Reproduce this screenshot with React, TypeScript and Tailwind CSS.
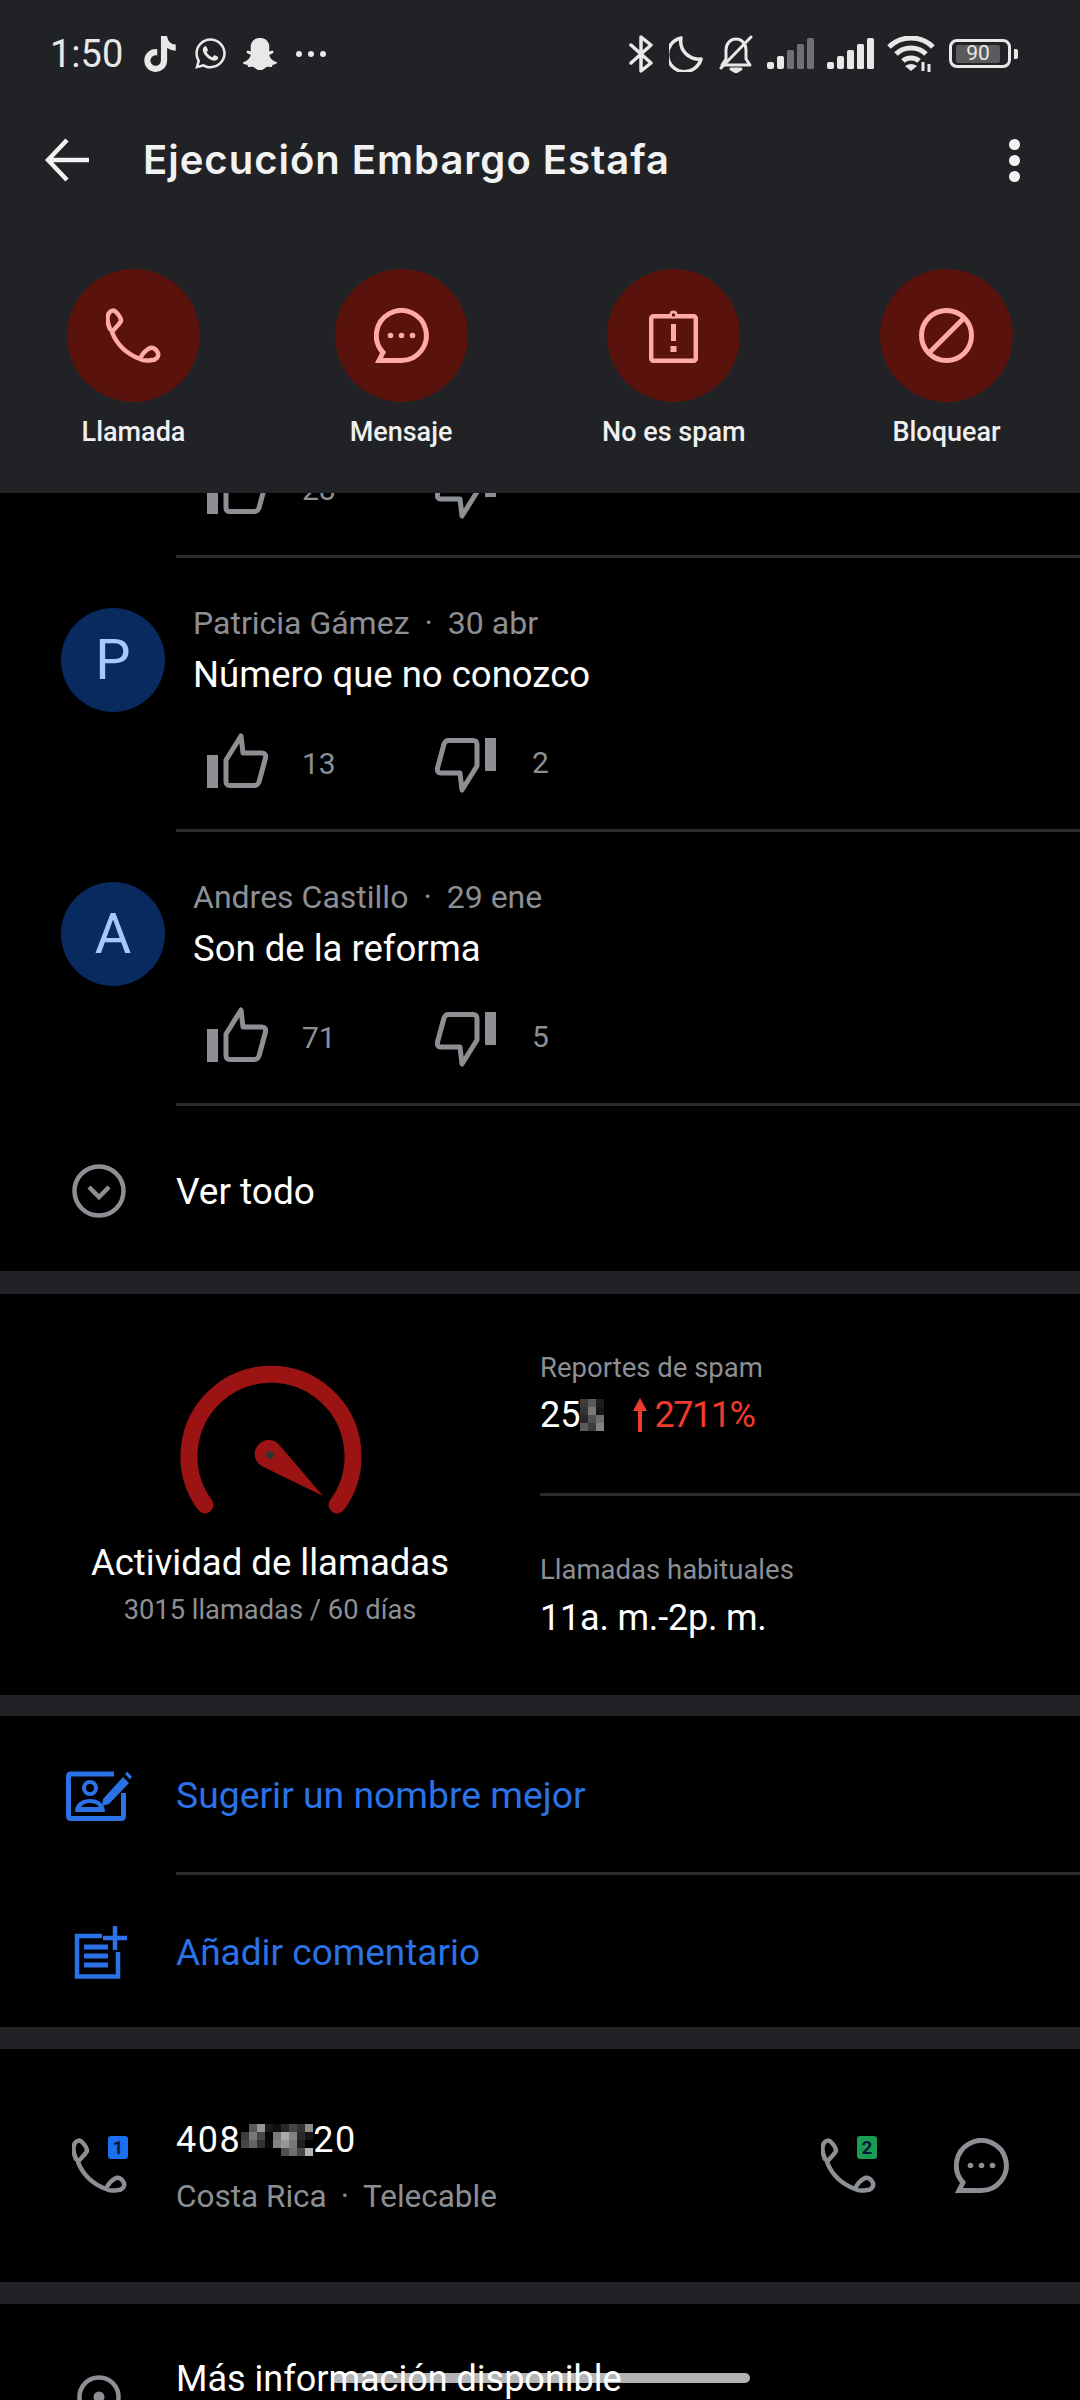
import React from 'react';
import { FaTiktok, FaWhatsapp, FaSnapchatGhost } from 'react-icons/fa';

const PhoneIcon = ({ className }: { className: string }) => (
  <svg viewBox="0 0 55 55" className={className} fill="none" stroke="currentColor" strokeWidth="4.5" strokeLinejoin="round" strokeLinecap="round">
    <path d="M4 21C1 14 1 8 3 5C5 2 8 2 10 4C13 7 15 10 15 13C13 17 9 20 6 24C11 37 21 46 34 51C36 46 40 42 44 40C47 39 50 41 52 45C53 49 50 52 46 52C41 53 37 53 34 51" />
  </svg>
);

const ChatIcon = ({ className }: { className: string }) => (
  <svg viewBox="0 0 55 55" className={className} fill="none" stroke="currentColor" strokeWidth="5">
    <path d="M5 52.5H27.5A25 25 0 1 0 9 44.5Z" />
    <circle cx="16.5" cy="27.5" r="2.8" fill="currentColor" stroke="none" />
    <circle cx="27.5" cy="27.5" r="2.8" fill="currentColor" stroke="none" />
    <circle cx="38.5" cy="27.5" r="2.8" fill="currentColor" stroke="none" />
  </svg>
);

const SpamIcon = ({ className }: { className: string }) => (
  <svg viewBox="0 0 49 55" className={className} fill="none" stroke="currentColor" strokeWidth="4.5" strokeLinejoin="round">
    <rect x="2.2" y="8.2" width="44.6" height="44.6" rx="2.5" />
    <circle cx="24.5" cy="6.5" r="4" fill="currentColor" stroke="none" />
    <circle cx="24.5" cy="7" r="1.7" fill="#5a120c" stroke="none" />
    <rect x="22" y="16" width="5" height="17" fill="currentColor" stroke="none" />
    <rect x="21.5" y="38" width="6" height="6" fill="currentColor" stroke="none" />
  </svg>
);

const BlockIcon = ({ className }: { className: string }) => (
  <svg viewBox="0 0 55 55" className={className} fill="none" stroke="currentColor" strokeWidth="5">
    <circle cx="27.5" cy="27.5" r="25" />
    <path d="M10 45L45 10" />
  </svg>
);

const ThumbIcon = ({ className }: { className: string }) => (
  <svg viewBox="0 0 61 55" className={className} fill="none">
    <rect x="0" y="22" width="11" height="33" fill="currentColor" />
    <path d="M19 27L34 3L36 20H55C58 20 59 22 58.500 25L52 49C51 51 50 52.500 48 52.500H23C20 52.500 19 51 19 48Z" stroke="currentColor" strokeWidth="5" strokeLinejoin="round" />
  </svg>
);

const Mosaic = ({ cols, cell, shades }: { cols: number; cell: number; shades: number[] }) => (
  <span className="inline-flex flex-wrap shrink-0" style={{ width: cols * cell }}>
    {shades.map((shade, i) => (
      <span key={i} style={{ width: cell, height: cell, background: `rgb(${shade},${shade},${shade})` }} />
    ))}
  </span>
);

const StatusBar = () => (
  <div className="h-[106px] flex items-center pl-[50px] pr-[62px] pt-[1px] text-[#e8e8e8]">
    <span className="text-[38px] w-[94px] leading-none">1:50</span>
    <FaTiktok className="w-[32px] h-[36px] mr-[17px]" />
    <FaWhatsapp className="w-[35px] h-[35px] mr-[15px]" />
    <FaSnapchatGhost className="w-[34px] h-[34px] mr-[19px]" />
    <div className="flex gap-[6px] mr-auto">
      <span className="w-[6px] h-[6px] rounded-full bg-[#e8e8e8]" />
      <span className="w-[6px] h-[6px] rounded-full bg-[#e8e8e8]" />
      <span className="w-[6px] h-[6px] rounded-full bg-[#e8e8e8]" />
    </div>
    <svg viewBox="0 0 24 38" className="w-[24px] h-[38px]" fill="none" stroke="currentColor" strokeWidth="3.5" strokeLinejoin="round" strokeLinecap="round">
      <path d="M2 10L22 28L12 36V2L22 10L2 28" />
    </svg>
    <svg viewBox="0 0 34 36" className="w-[34px] h-[36px] ml-[16px]" fill="none" stroke="currentColor" strokeWidth="3.5" strokeLinejoin="round">
      <path d="M12 2A17 17 0 1 0 32 23A18 18 0 0 1 12 2Z" />
    </svg>
    <svg viewBox="0 0 34 38" className="w-[34px] h-[38px] ml-[16px]" fill="none" stroke="currentColor" strokeWidth="3" strokeLinejoin="round" strokeLinecap="round">
      <path d="M3 30H31L27 24V15C27 8 22 4 17 4C12 4 7 8 7 15V24Z" />
      <path d="M2 33L32 2" />
      <path d="M12 34H22L17 37Z" fill="currentColor" />
    </svg>
    <svg viewBox="0 0 47 31" className="w-[47px] h-[31px] ml-[14px]" fill="currentColor">
      <rect x="0" y="24" width="7" height="7" rx="2" />
      <rect x="10" y="18" width="7" height="13" rx="2" />
      <rect x="20" y="12" width="7" height="19" rx="1.5" fill="#6f7073" />
      <rect x="30" y="6" width="7" height="25" rx="1.5" fill="#6f7073" />
      <rect x="40" y="0" width="7" height="31" rx="1.5" fill="#6f7073" />
    </svg>
    <svg viewBox="0 0 47 31" className="w-[47px] h-[31px] ml-[13px]" fill="currentColor">
      <rect x="0" y="24" width="7" height="7" rx="2" />
      <rect x="10" y="18" width="7" height="13" rx="2" />
      <rect x="20" y="12" width="7" height="19" rx="1.5" />
      <rect x="30" y="6" width="7" height="25" rx="1.5" />
      <rect x="40" y="0" width="7" height="31" rx="1.5" />
    </svg>
    <svg viewBox="0 0 48 36" className="w-[48px] h-[36px] ml-[13px]" fill="none" stroke="currentColor" strokeWidth="5">
      <path d="M2 11C14 -1 34 -1 46 11" />
      <path d="M9 18C17 10 31 10 39 18" />
      <path d="M16 25C20 21 28 21 32 25" />
      <path d="M18 30L24 35L30 30Q24 26 18 30Z" fill="currentColor" stroke="none" />
      <path d="M36 26V35M42 28V36" strokeWidth="3" />
    </svg>
    <div className="flex items-center ml-[14px]">
      <div className="w-[62px] h-[29px] rounded-[8px] border-[3px] border-[#e8e8e8] flex items-center pl-[4px]">
        <span className="w-[44px] h-[18px] bg-[#5b5b5d] rounded-[2px] flex items-center justify-center text-[21px] leading-none">90</span>
      </div>
      <span className="w-[4px] h-[10px] ml-[3px] rounded-r-[2px] bg-[#e8e8e8]" />
    </div>
  </div>
);

const Toolbar = () => (
  <div className="h-[108px] flex items-center pl-[45px] pr-[60px]">
    <svg viewBox="0 0 44 44" className="w-[44px] h-[44px] text-[#f2f2f2]" fill="none" stroke="currentColor" strokeWidth="4.5">
      <path d="M22 2L3 22L22 42M3 22H44" />
    </svg>
    <h1 className="ml-[54px] text-[40px] leading-none font-semibold text-[#f2f2f2] font-['Inter',sans-serif] tracking-[1px]">Ejecución Embargo Estafa</h1>
    <div className="ml-auto flex flex-col gap-[5px]">
      <span className="w-[11px] h-[11px] rounded-full bg-[#f2f2f2]" />
      <span className="w-[11px] h-[11px] rounded-full bg-[#f2f2f2]" />
      <span className="w-[11px] h-[11px] rounded-full bg-[#f2f2f2]" />
    </div>
  </div>
);

const actions = [
  { label: 'Llamada', icon: <PhoneIcon className="w-[55px] h-[55px]" /> },
  { label: 'Mensaje', icon: <ChatIcon className="w-[55px] h-[55px]" /> },
  { label: 'No es spam', icon: <SpamIcon className="w-[49px] h-[55px]" /> },
  { label: 'Bloquear', icon: <BlockIcon className="w-[55px] h-[55px]" /> },
];

const ActionButtons = () => (
  <div className="flex justify-between px-[67px] pt-[55px]">
    {actions.map((action) => (
      <div key={action.label} className="flex flex-col items-center">
        <div className="w-[133px] h-[133px] rounded-full bg-[#5a120c] text-[#ffaaa3] flex items-center justify-center">
          {action.icon}
        </div>
        <span className="mt-[10px] text-[27px] leading-[40px] font-medium text-[#f0f0f0] whitespace-nowrap">{action.label}</span>
      </div>
    ))}
  </div>
);

const Votes = ({ up, down }: { up: string; down?: string }) => (
  <div className="h-[60px] flex items-start pl-[207px] text-[#8c8f94]">
    <div className="w-[228px] flex items-center">
      <ThumbIcon className="w-[61px] h-[55px]" />
      <span className="ml-[34px] mt-[6px] text-[30px] leading-none">{up}</span>
    </div>
    <ThumbIcon className="w-[61px] h-[55px] rotate-180 mt-[5px]" />
    {down && <span className="ml-[36px] mt-[15px] text-[30px] leading-none">{down}</span>}
  </div>
);

const Divider = ({ className }: { className: string }) => <div className={`h-[3px] bg-[#2a2b2e] ${className}`} />;

const comments = [
  { initial: 'P', name: 'Patricia Gámez', date: '30 abr', text: 'Número que no conozco', up: '13', down: '2' },
  { initial: 'A', name: 'Andres Castillo', date: '29 ene', text: 'Son de la reforma', up: '71', down: '5' },
];

const Comment = ({ comment }: { comment: (typeof comments)[number] }) => (
  <div>
    <div className="h-[271px]">
      <div className="flex pl-[61px]">
        <div className="mt-[50px] w-[104px] h-[104px] rounded-full bg-[#082a5e] text-[#a8c8fa] text-[56px] flex items-center justify-center">
          {comment.initial}
        </div>
        <div className="ml-[28px] pt-[42px]">
          <div className="text-[32px] leading-[46px] text-[#8c8f94] whitespace-nowrap">
            {comment.name}<span className="mx-[15px]">·</span>{comment.date}
          </div>
          <div className="mt-[3px] text-[36.500px] leading-[52px] text-white whitespace-nowrap">{comment.text}</div>
        </div>
      </div>
      <div className="mt-[21px]">
        <Votes up={comment.up} down={comment.down} />
      </div>
    </div>
    <Divider className="ml-[176px]" />
  </div>
);

const SectionGap = ({ className }: { className: string }) => <div className={`bg-[#212226] ${className}`} />;

const Stats = () => (
  <div className="h-[401px] flex pt-[56px]">
    <div className="w-[540px] flex flex-col items-center">
      <svg viewBox="0 0 220 180" className="w-[220px] h-[180px]" fill="none">
        <path d="M45 155A82 82 0 1 1 177 155" stroke="#9b1313" strokeWidth="17" strokeLinecap="round" />
        <path d="M118.500 94L163 146L101.500 116A14 14 0 1 1 118.500 94Z" fill="#9b1313" />
        <circle cx="110" cy="105" r="4" fill="#333" />
      </svg>
      <div className="mt-[11px] text-[36.500px] leading-[44px] text-white whitespace-nowrap">Actividad de llamadas</div>
      <div className="mt-[7px] text-[27.300px] leading-[36px] text-[#8c8f94] whitespace-nowrap">3015 llamadas / 60 días</div>
    </div>
    <div className="flex-1">
      <div className="text-[27.500px] leading-[36px] text-[#8c8f94]">Reportes de spam</div>
      <div className="mt-[5px] h-[48px] flex items-center text-[36px] leading-[48px] text-white">
        <span>25</span>
        <Mosaic cols={3} cell={8} shades={[60, 90, 30, 50, 120, 20, 40, 80, 110, 90, 60, 130]} />
        <svg viewBox="0 0 14 34" className="w-[14px] h-[34px] ml-[29px] text-[#f03a2b]" fill="currentColor">
          <path d="M7 0L14 13H9V34H5V13H0Z" />
        </svg>
        <span className="ml-[7px] text-[#f03a2b] tracking-[-1.500px]">2711%</span>
      </div>
      <Divider className="mt-[54px]" />
      <div className="mt-[56px] text-[27.500px] leading-[36px] text-[#8c8f94]">Llamadas habituales</div>
      <div className="mt-[6px] text-[36px] leading-[48px] text-white whitespace-nowrap tracking-[-0.200px]">11a. m.-2p. m.</div>
    </div>
  </div>
);

const Suggestions = () => (
  <div className="h-[311px] text-[#2a72e5]">
    <div className="h-[156px] flex items-center pt-[3px]">
      <svg viewBox="0 0 66 50" className="w-[66px] h-[50px] ml-[66px]" fill="currentColor">
        <path d="M48 3H5C3.500 3 2.500 4 2.500 5.500V45C2.500 46.500 3.500 47.500 5 47.500H55C56.500 47.500 57.500 46.500 57.500 45V22" fill="none" stroke="currentColor" strokeWidth="5" />
        <circle cx="24" cy="17" r="6" fill="none" stroke="currentColor" strokeWidth="4" />
        <path d="M9 41C9 32 16 28 24 28C32 28 39 32 39 41ZM15 36H33C31 33 28 32 24 32C20 32 17 33 15 36Z" fillRule="evenodd" />
        <path d="M37 28L57 6L63 12L43 33L36 35Z" />
        <path d="M59 3L61 0.500L66 5.500L64 8.500Z" />
      </svg>
      <span className="ml-[44px] text-[37.300px] leading-none">Sugerir un nombre mejor</span>
    </div>
    <Divider className="ml-[176px]" />
    <div className="h-[152px] flex items-center pt-[2px]">
      <svg viewBox="0 0 53 53" className="w-[53px] h-[53px] ml-[74px]" fill="none" stroke="currentColor" strokeWidth="4.5">
        <path d="M28 10H3V50.500H44V26" />
        <path d="M10 21H34M10 30H34M10 39H34" strokeWidth="5" />
        <path d="M41 0V24M29 12H53" />
      </svg>
      <span className="ml-[49px] text-[37px] leading-none">Añadir comentario</span>
    </div>
  </div>
);

const Badge = ({ value, className }: { value: string; className: string }) => (
  <span className={`absolute -top-[2px] -right-[1px] w-[20px] h-[23px] rounded-[3px] flex items-center justify-center text-[19px] leading-none font-bold text-[#06183a] ${className}`}>
    {value}
  </span>
);

const Contact = () => (
  <div className="h-[233px] flex items-start pl-[72px] pr-[71px] text-[#8c8f94]">
    <div className="relative mt-[89px]">
      <PhoneIcon className="w-[55px] h-[55px]" />
      <Badge value="1" className="bg-[#1b6ff0]" />
    </div>
    <div className="ml-[49px] pt-[67px]">
      <div className="h-[48px] flex items-center text-[36px] leading-[48px] text-white">
        <span className="tracking-[1.500px]">408</span>
        <Mosaic cols={9} cell={8} shades={[0, 90, 150, 25, 15, 40, 70, 50, 140, 60, 120, 70, 5, 120, 170, 130, 40, 20, 70, 100, 50, 10, 130, 150, 120, 30, 0, 0, 0, 0, 0, 0, 80, 110, 70, 180]} />
        <span className="tracking-[1.500px]">20</span>
      </div>
      <div className="mt-[13px] text-[31.500px] leading-[40px] whitespace-nowrap">Costa Rica<span className="mx-[14px]">·</span>Telecable</div>
    </div>
    <div className="ml-auto mt-[89px] flex gap-[78px]">
      <div className="relative">
        <PhoneIcon className="w-[55px] h-[55px]" />
        <Badge value="2" className="bg-[#1a9c55]" />
      </div>
      <ChatIcon className="w-[55px] h-[55px]" />
    </div>
  </div>
);

const App = () => (
  <div className="relative w-[1080px] h-[2400px] overflow-hidden bg-black flex flex-col font-['Roboto',sans-serif]">
    <header className="h-[493px] shrink-0 bg-[#212226] relative z-10">
      <StatusBar />
      <Toolbar />
      <ActionButtons />
    </header>

    <main className="flex-1 min-h-0 overflow-hidden">
      <div className="-mt-[34px] pb-[36px]">
        <Votes up="28" />
      </div>
      <Divider className="ml-[176px]" />
      {comments.map((comment) => (
        <Comment key={comment.initial} comment={comment} />
      ))}

      <div className="h-[165px] flex items-center pl-[72px] pt-[5px]">
        <svg viewBox="0 0 54 54" className="w-[54px] h-[54px] text-[#8c8f94]" fill="none" stroke="currentColor" strokeWidth="4.5">
          <circle cx="27" cy="27" r="24.500" />
          <path d="M17 23L27 33L37 23" />
        </svg>
        <span className="ml-[50px] text-[37px] leading-none text-white">Ver todo</span>
      </div>

      <SectionGap className="h-[23px]" />
      <Stats />
      <SectionGap className="h-[21px]" />
      <Suggestions />
      <SectionGap className="h-[22px]" />
      <Contact />
      <SectionGap className="h-[22px]" />

      <div className="relative z-10 flex items-start pl-[77px]">
        <svg viewBox="0 0 44 60" className="w-[44px] h-[60px] mt-[71px] text-[#8c8f94]" fill="none" stroke="currentColor" strokeWidth="4.5">
          <path d="M22 58C10 46 2.500 34 2.500 22A19.500 19.500 0 0 1 41.500 22C41.500 34 34 46 22 58Z" />
          <circle cx="22" cy="22" r="5.500" fill="currentColor" stroke="none" />
        </svg>
        <span className="ml-[55px] mt-[51px] text-[36px] leading-[48px] text-white whitespace-nowrap">Más información disponible</span>
      </div>
    </main>

    <div className="absolute left-[331px] top-[2373px] w-[419px] h-[10px] rounded-full bg-[#b4b4b4]" />
  </div>
);

export default App;
